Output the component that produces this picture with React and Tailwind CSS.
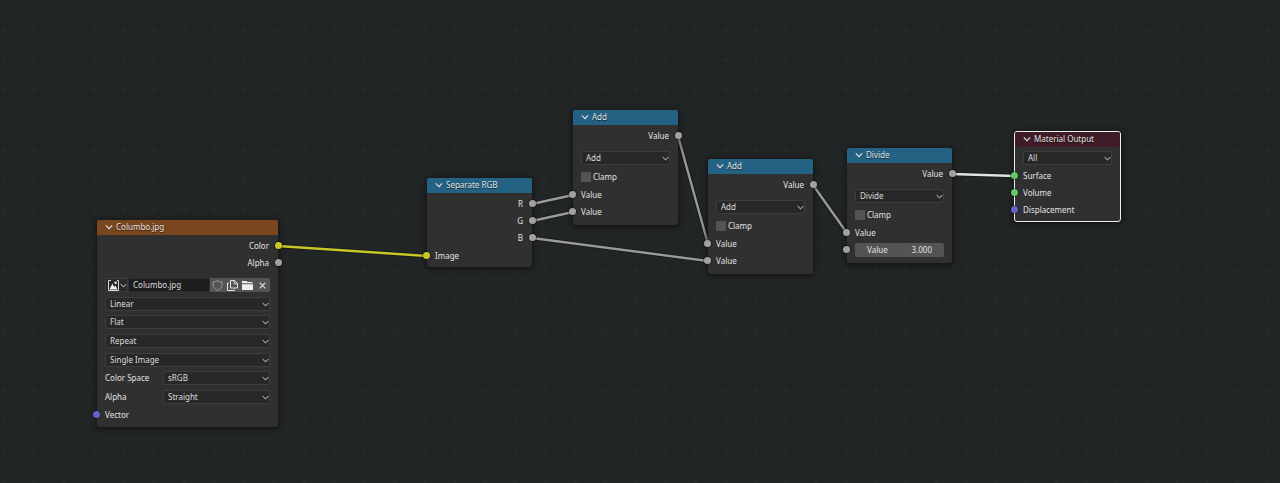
import React, { useState } from 'react';

const LINKS = [
  { from: [278, 246], to: [427, 256], color: '#c7c729' },
  { from: [532, 204], to: [573, 195], color: '#9a9a9a' },
  { from: [532, 221], to: [573, 212], color: '#9a9a9a' },
  { from: [532, 238], to: [708, 261], color: '#9a9a9a' },
  { from: [678, 136], to: [708, 244], color: '#9a9a9a' },
  { from: [813, 185], to: [847, 233], color: '#9a9a9a' },
  { from: [952, 174], to: [1015, 176], color: '#dfe6df' },
];

const Chevron = ({ className }) => (
  <svg className={className} viewBox="0 0 10 10" fill="none" stroke="currentColor" strokeWidth="1.4" aria-hidden="true">
    <path d="M1 3 L5 7 L9 3" />
  </svg>
);

const Socket = ({ side, color }) => (
  <span
    className={`absolute top-[5px] h-[7px] w-[7px] rounded-full ring-1 ring-black/30 ${side === 'left' ? '-left-[4px]' : '-right-[4px]'} ${color}`}
  />
);

const Output = ({ label, color = 'bg-[#a1a1a1]' }) => (
  <div className="relative flex h-[17px] items-center justify-end px-[9px]">
    {label}
    <Socket side="right" color={color} />
  </div>
);

const Input = ({ label, color = 'bg-[#a1a1a1]' }) => (
  <div className="relative flex h-[17px] items-center px-[8px]">
    {label}
    <Socket side="left" color={color} />
  </div>
);

const Dropdown = ({ id, label, options }) => (
  <div className="relative h-[14px] w-full">
    <select
      id={id}
      aria-label={label}
      className="block h-[14px] w-full appearance-none rounded-[2px] border border-[#3d3d3d] bg-[#282828] px-[4px] leading-[12px] text-[#dcdcdc] outline-none"
    >
      {options.map((option) => (
        <option key={option}>{option}</option>
      ))}
    </select>
    <Chevron className="pointer-events-none absolute right-[1px] top-[4px] h-[7px] w-[7px]" />
  </div>
);

const Clamp = ({ id }) => (
  <div className="flex h-[14px] items-center gap-[2px]">
    <input id={id} type="checkbox" className="h-[10px] w-[10px] appearance-none rounded-[1px] bg-[#545454] checked:bg-[#4772b3]" />
    <label htmlFor={id}>Clamp</label>
  </div>
);

// Node frame: x / y come in as a position class on the free canvas
const Node = ({ title, place, header, selected, children }) => (
  <section
    className={`absolute rounded-[3px] bg-[#303030] shadow-[0_1px_5px_2px_rgba(0,0,0,0.4)] ${place} ${selected ? 'border border-[#eeeeee]' : ''}`}
  >
    <h2 className={`flex h-[15px] items-center gap-[3px] rounded-t-[2px] px-[8px] pb-px [text-shadow:0_1px_1px_rgba(0,0,0,0.6)] ${header}`}>
      <Chevron className="h-[8px] w-[8px]" />
      {title}
    </h2>
    {children}
  </section>
);

const MathNode = ({ id, operation, place, children }) => (
  <Node title={operation} place={place} header="bg-[#246283]">
    <div className="pt-[2px]">
      <Output label="Value" />
    </div>
    <div className="mt-[7px] flex flex-col gap-[5px] px-[8px]">
      <Dropdown id={`${id}-op`} label="Operation" options={[operation, 'Subtract', 'Multiply']} />
      <Clamp id={`${id}-clamp`} />
    </div>
    <div className="pt-[2px] pb-[5px]">
      <Input label="Value" />
      {children || <Input label="Value" />}
    </div>
  </Node>
);

const ValueField = () => {
  const [value, setValue] = useState('3.000');

  return (
    <div className="relative flex h-[17px] items-center px-[8px]">
      <div className="flex h-[14px] w-full items-center justify-between rounded-[2px] bg-[#545454] px-[12px]">
        <label htmlFor="divisor">Value</label>
        <input
          id="divisor"
          value={value}
          onChange={(e) => setValue(e.target.value)}
          className="w-[32px] bg-transparent text-right outline-none"
        />
      </div>
      <Socket side="left" color="bg-[#a1a1a1]" />
    </div>
  );
};

const iconButton = 'flex h-[14px] w-[15px] items-center justify-center bg-[#545454]';

const FileRow = () => (
  <div className="flex h-[14px] gap-px">
    <button aria-label="Browse image" className="flex w-[23px] items-center justify-end gap-[1px] rounded-l-[2px] border border-[#3d3d3d] bg-[#282828]">
      <svg className="h-[11px] w-[11px] shrink-0" viewBox="0 0 11 11" aria-hidden="true">
        <path d="M3 .5H.5V10.5H10.5V.5H9" fill="none" stroke="#d8d8d8" />
        <path d="M1.5 9.5 L4.5 3.5 L7 9.5Z M6 7 L7.5 5.5 L9.5 9.5H6Z" fill="#f0f0f0" />
        <circle cx="7.6" cy="2.8" r="1.2" fill="#f0f0f0" />
      </svg>
      <Chevron className="h-[7px] w-[7px] shrink-0" />
    </button>
    <input
      aria-label="Image name"
      defaultValue="Columbo.jpg"
      className="min-w-0 flex-1 border-y border-[#2c2c2c] bg-[#1d1d1d] px-[4px] text-[#dcdcdc] outline-none"
    />
    <div className="flex">
      <button aria-label="Fake user" className={iconButton}>
        <svg className="h-[11px] w-[11px]" viewBox="0 0 11 11" fill="none" stroke="#9a9a9a" aria-hidden="true">
          <path d="M5.5 .7 C4.2 1.6 2.5 1.9 1 1.9 V5 C1 7.6 3 9.4 5.5 10.4 C8 9.4 10 7.6 10 5 V1.9 C8.5 1.9 6.8 1.6 5.5 .7Z" />
        </svg>
      </button>
      <button aria-label="New image" className={iconButton}>
        <svg className="h-[11px] w-[11px]" viewBox="0 0 11 11" fill="none" stroke="#e0e0e0" aria-hidden="true">
          <path d="M3.5 .5H7.5L10.5 3.5V8H3.5Z M7.2 .5V3.8H10.5 M2 3H.5V10.5H7.5V9.5" />
        </svg>
      </button>
      <button aria-label="Open image" className={iconButton}>
        <svg className="h-[11px] w-[11px]" viewBox="0 0 11 11" fill="#eeeeee" aria-hidden="true">
          <path d="M0 1H4.5L5.5 2H10.5V3.2H0Z M0 4.2H11V10H0Z" />
        </svg>
      </button>
      <button aria-label="Unlink image" className={`${iconButton} rounded-r-[2px]`}>
        <svg className="h-[7px] w-[7px]" viewBox="0 0 7 7" stroke="#e0e0e0" strokeWidth="1.1" aria-hidden="true">
          <path d="M.7 .7 L6.3 6.3 M6.3 .7 L.7 6.3" />
        </svg>
      </button>
    </div>
  </div>
);

const Grid = () => (
  <svg className="absolute inset-0 h-full w-full" aria-hidden="true">
    <defs>
      <pattern id="dots" x="2" y="28" width="30.08" height="30.08" patternUnits="userSpaceOnUse">
        <rect width="3.5" height="3.5" fill="#2a2829" />
      </pattern>
    </defs>
    <rect width="100%" height="100%" fill="url(#dots)" />
  </svg>
);

const Links = () => (
  <svg className="absolute inset-0 h-full w-full" strokeLinecap="round" aria-hidden="true">
    {LINKS.map(({ from, to, color }) => {
      const line = { x1: from[0], y1: from[1], x2: to[0], y2: to[1] };
      return (
        <g key={`${from}-${to}`}>
          <line {...line} stroke="#151717" strokeWidth="4" />
          <line {...line} stroke={color} strokeWidth="2.4" />
        </g>
      );
    })}
  </svg>
);

export default function App() {
  return (
    <main className="relative min-h-screen w-full overflow-hidden bg-[#222526] font-['Noto_Sans',sans-serif] text-[8px] leading-[12px] text-[#e2e2e2]">
      <Grid />
      <Links />

      <Node title="Columbo.jpg" place="left-[97px] top-[220px] w-[181px]" header="bg-[#79461d]">
        <div className="pt-[2px]">
          <Output label="Color" color="bg-[#c7c729]" />
          <Output label="Alpha" />
        </div>
        <div className="mt-[7px] flex h-[126px] flex-col justify-between px-[8px]">
          <FileRow />
          <Dropdown label="Interpolation" options={['Linear', 'Closest', 'Cubic']} />
          <Dropdown label="Projection" options={['Flat', 'Box', 'Sphere']} />
          <Dropdown label="Extension" options={['Repeat', 'Extend', 'Clip']} />
          <Dropdown label="Source" options={['Single Image', 'Movie']} />
          <div className="flex items-center">
            <label htmlFor="color-space" className="w-[58px] shrink-0">Color Space</label>
            <Dropdown id="color-space" options={['sRGB', 'Linear', 'Raw']} />
          </div>
          <div className="flex items-center">
            <label htmlFor="alpha-mode" className="w-[58px] shrink-0">Alpha</label>
            <Dropdown id="alpha-mode" options={['Straight', 'Premultiplied']} />
          </div>
        </div>
        <div className="pt-[2px] pb-[4px]">
          <Input label="Vector" color="bg-[#6363c7]" />
        </div>
      </Node>

      <Node title="Separate RGB" place="left-[427px] top-[178px] w-[105px]" header="bg-[#246283]">
        <div className="pt-[2px]">
          <Output label="R" />
          <Output label="G" />
          <Output label="B" />
        </div>
        <div className="pt-[1px] pb-[3px]">
          <Input label="Image" color="bg-[#c7c729]" />
        </div>
      </Node>

      <MathNode id="add-rg" operation="Add" place="left-[573px] top-[110px] w-[105px]" />
      <MathNode id="add-b" operation="Add" place="left-[708px] top-[159px] w-[105px]" />
      <MathNode id="divide" operation="Divide" place="left-[847px] top-[148px] w-[105px]">
        <ValueField />
      </MathNode>

      <Node title="Material Output" place="left-[1014px] top-[131px] w-[107px]" header="bg-[#3f1c27]" selected>
        <div className="mt-[4px] px-[8px]">
          <Dropdown label="Target" options={['All', 'Eevee', 'Cycles']} />
        </div>
        <div className="pt-[2px] pb-[3px]">
          <Input label="Surface" color="bg-[#63c763]" />
          <Input label="Volume" color="bg-[#63c763]" />
          <Input label="Displacement" color="bg-[#6363c7]" />
        </div>
      </Node>
    </main>
  );
}
